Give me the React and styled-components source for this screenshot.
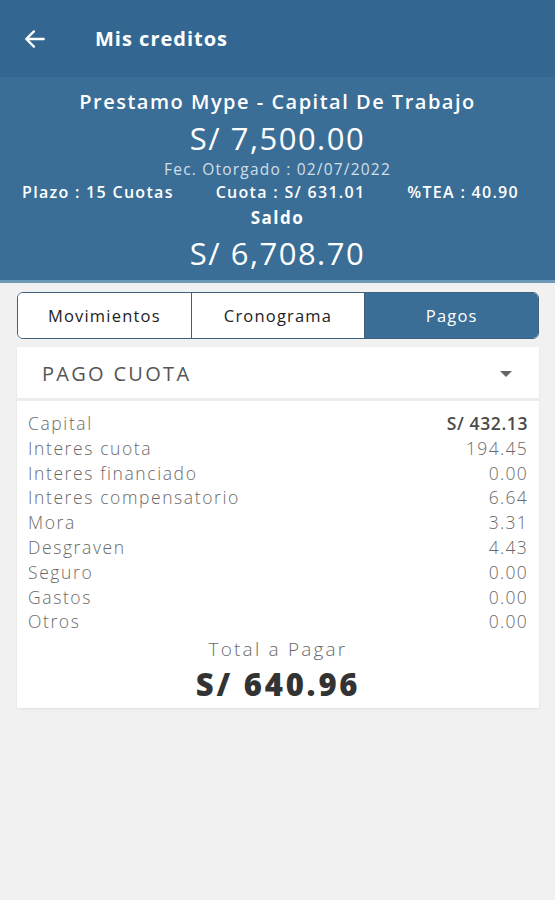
import styled, { createGlobalStyle } from 'styled-components'

const GlobalStyle = createGlobalStyle`
    body {
        margin: 0;
        background-color: #f1f1f1;
        font-family: "Open Sans", "Liberation Sans", sans-serif;
    }
`

const rows = [
    { label: 'Capital', value: 'S/ 432.13', strong: true },
    { label: 'Interes cuota', value: '194.45' },
    { label: 'Interes financiado', value: '0.00' },
    { label: 'Interes compensatorio', value: '6.64' },
    { label: 'Mora', value: '3.31' },
    { label: 'Desgraven', value: '4.43' },
    { label: 'Seguro', value: '0.00' },
    { label: 'Gastos', value: '0.00' },
    { label: 'Otros', value: '0.00' },
]

const tabs = ['Movimientos', 'Cronograma', 'Pagos']

const App = () => {
    return (
        <Page>
            <GlobalStyle />
            <TopBar>
                <BackIcon viewBox="0 0 24 24">
                    <path d="M20 12H4M11 5l-7 7 7 7" />
                </BackIcon>
                <Title>Mis creditos</Title>
            </TopBar>
            <Summary>
                <Product>Prestamo Mype - Capital De Trabajo</Product>
                <Amount>S/ 7,500.00</Amount>
                <DateText>Fec. Otorgado : 02/07/2022</DateText>
                <Terms>
                    <span>Plazo : 15 Cuotas</span>
                    <span>Cuota : S/ 631.01</span>
                    <span>%TEA : 40.90</span>
                </Terms>
                <SaldoLabel>Saldo</SaldoLabel>
                <Amount saldo>S/ 6,708.70</Amount>
            </Summary>
            <Content>
                <Tabs>
                    {tabs.map((t) => (
                        <Tab key={t} active={t === 'Pagos'}>{t}</Tab>
                    ))}
                </Tabs>
                <Card>
                    <Select>
                        <span>PAGO CUOTA</span>
                        <Caret />
                    </Select>
                    <List>
                        {rows.map((r) => (
                            <Row key={r.label}>
                                <span>{r.label}</span>
                                <Value strong={r.strong}>{r.value}</Value>
                            </Row>
                        ))}
                    </List>
                    <TotalLabel>Total a Pagar</TotalLabel>
                    <Total>S/ 640.96</Total>
                </Card>
            </Content>
        </Page>
    )
}

const Page = styled.div`
    width: 555px;
    min-height: 900px;
    background-color: #f1f1f1;
`

const TopBar = styled.div`
    height: 77px;
    background-color: #336791;
    display: flex;
    align-items: center;
    padding-left: 22px;
    box-sizing: border-box;
`

const BackIcon = styled.svg`
    width: 26px;
    height: 26px;
    fill: none;
    stroke: #fff;
    stroke-width: 2.2;
    stroke-linecap: round;
    stroke-linejoin: round;
`

const Title = styled.h1`
    margin: 0 0 0 47px;
    font-size: 20px;
    font-weight: 700;
    letter-spacing: 1px;
    color: #fff;
`

const Summary = styled.div`
    background-color: #3a6e96;
    border-bottom: 3px solid #6d98b8;
    display: flex;
    flex-direction: column;
    align-items: center;
    padding: 12px 0 7px;
    color: #fff;
`

const Product = styled.div`
    font-size: 20px;
    font-weight: 600;
    letter-spacing: 1.5px;
    line-height: 26px;
`

const Amount = styled.div`
    font-size: 31px;
    line-height: ${(props) => (props.saldo ? '40px' : '38px')};
    letter-spacing: 1.5px;
    font-weight: 500;
    margin-top: ${(props) => (props.saldo ? '2px' : '4px')};
`

const DateText = styled.div`
    font-size: 15.5px;
    line-height: 22px;
    letter-spacing: 1.2px;
    color: #d3dfe9;
    margin-top: 1px;
`

const Terms = styled.div`
    width: 100%;
    display: flex;
    justify-content: space-between;
    padding: 0 36px 0 22px;
    box-sizing: border-box;
    font-size: 16px;
    font-weight: 600;
    letter-spacing: 1.3px;
    line-height: 24px;
`

const SaldoLabel = styled.div`
    font-size: 17px;
    font-weight: 700;
    letter-spacing: 1.5px;
    line-height: 26px;
    margin-top: 1px;
`

const Content = styled.div`
    padding: 9px 16px 0 17px;
`

const Tabs = styled.div`
    display: flex;
    height: 47px;
    border: 1.5px solid #40617d;
    border-radius: 6px;
    overflow: hidden;
    box-sizing: border-box;
    background-color: #fff;
`

const Tab = styled.div`
    flex: 1;
    display: flex;
    align-items: center;
    justify-content: center;
    font-size: 16.5px;
    letter-spacing: 1.2px;
    color: ${(props) => (props.active ? '#fff' : '#222')};
    background-color: ${(props) => (props.active ? '#3a6e96' : '#fff')};
    border-left: 1.5px solid #40617d;
    &:first-child{
        border-left: none;
    }
`

const Card = styled.div`
    margin-top: 8px;
    background-color: #fff;
    box-shadow: 0 1px 2px rgba(0, 0, 0, 0.08);
    padding-bottom: 4px;
`

const Select = styled.div`
    height: 54px;
    display: flex;
    align-items: center;
    justify-content: space-between;
    padding: 2px 27px 0 25px;
    box-sizing: border-box;
    font-size: 20px;
    color: #555;
    letter-spacing: 2.3px;
    border-bottom: 3px solid #ececec;
`

const Caret = styled.div`
    width: 0;
    height: 0;
    border-left: 6px solid transparent;
    border-right: 6px solid transparent;
    border-top: 6px solid #666;
`

const List = styled.div`
    padding: 10px 11px 0 11px;
`

const Row = styled.div`
    display: flex;
    justify-content: space-between;
    font-size: 17.5px;
    line-height: 24.8px;
    letter-spacing: 1.6px;
    color: #6a6a6a;
    font-weight: 300;
`

const Value = styled.span`
    font-weight: ${(props) => (props.strong ? 600 : 300)};
    color: ${(props) => (props.strong ? '#4a4a4a' : '#6a6a6a')};
    letter-spacing: ${(props) => (props.strong ? '0.6px' : '1.3px')};
`

const TotalLabel = styled.div`
    text-align: center;
    font-size: 19px;
    color: #6a6a6a;
    font-weight: 300;
    letter-spacing: 2.2px;
    margin-top: 2px;
    line-height: 26px;
`

const Total = styled.div`
    text-align: center;
    font-size: 31px;
    font-weight: 800;
    letter-spacing: 2.8px;
    color: #333;
    line-height: 40px;
    margin-top: 2px;
`

export default App
